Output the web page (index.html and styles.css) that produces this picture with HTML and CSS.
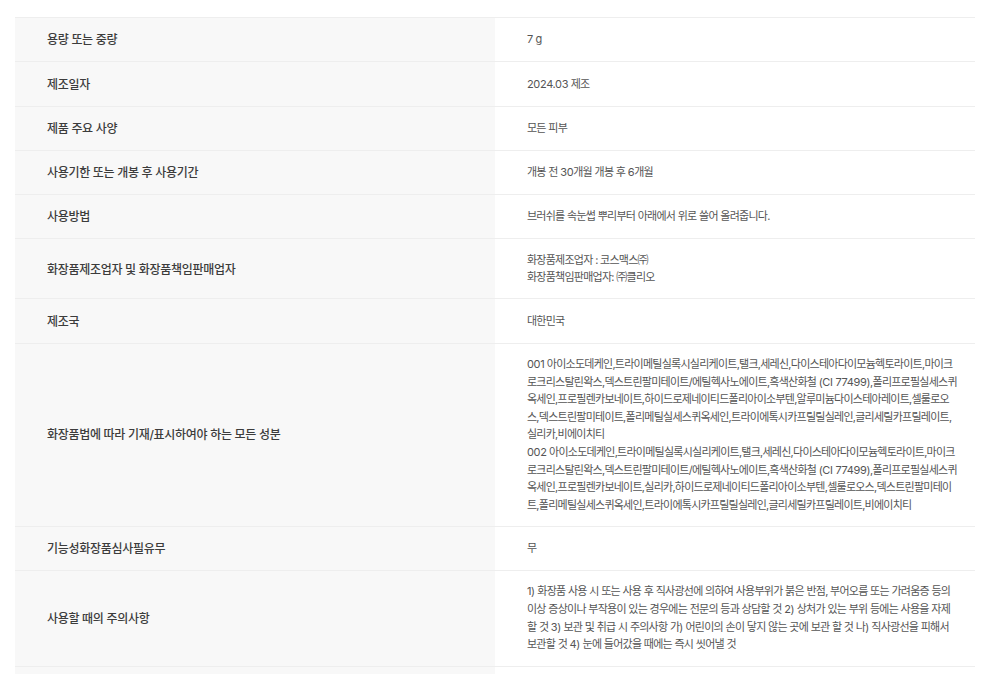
FILE: index.html
```html
<!DOCTYPE html>
<html lang="ko">
<head>
<meta charset="utf-8">
<title>상품 정보</title>
<link rel="stylesheet" href="styles.css">
</head>
<body>
<table class="spec">
<tbody>
<tr><th>용량 또는 중량</th><td><span class="num">7 g</span></td></tr>
<tr><th>제조일자</th><td><span class="num">2024.03</span> 제조</td></tr>
<tr><th>제품 주요 사양</th><td>모든 피부</td></tr>
<tr><th>사용기한 또는 개봉 후 사용기간</th><td>개봉 전 <span class="num">30</span>개월 개봉 후 <span class="num">6</span>개월</td></tr>
<tr><th>사용방법</th><td>브러쉬를 속눈썹 뿌리부터 아래에서 위로 쓸어 올려줍니다.</td></tr>
<tr><th>화장품제조업자 및 화장품책임판매업자</th><td>화장품제조업자 : 코스맥스㈜<br>화장품책임판매업자: ㈜클리오</td></tr>
<tr><th>제조국</th><td>대한민국</td></tr>
<tr><th>화장품법에 따라 기재/표시하여야 하는 모든 성분</th><td><span class="num">001</span> 아이소도데케인,트라이메틸실록시실리케이트,탤크,세레신,다이스테아다이모늄헥토라이트,마이크로크리스탈린왁스,덱스트린팔미테이트/에틸헥사노에이트,흑색산화철 <span class="num">(CI 77499)</span>,폴리프로필실세스퀴옥세인,프로필렌카보네이트,하이드로제네이티드폴리아이소부텐,알루미늄다이스테아레이트,셀룰로오스,덱스트린팔미테이트,폴리메틸실세스퀴옥세인,트라이에톡시카프릴릴실레인,글리세릴카프릴레이트,실리카,비에이치티<br><span class="num">002</span> 아이소도데케인,트라이메틸실록시실리케이트,탤크,세레신,다이스테아다이모늄헥토라이트,마이크로크리스탈린왁스,덱스트린팔미테이트/에틸헥사노에이트,흑색산화철 <span class="num">(CI 77499)</span>,폴리프로필실세스퀴옥세인,프로필렌카보네이트,실리카,하이드로제네이티드폴리아이소부텐,셀룰로오스,덱스트린팔미테이트,폴리메틸실세스퀴옥세인,트라이에톡시카프릴릴실레인,글리세릴카프릴레이트,비에이치티</td></tr>
<tr><th>기능성화장품심사필유무</th><td>무</td></tr>
<tr class="notice"><th>사용할 때의 주의사항</th><td><span class="num">1)</span> 화장품 사용 시 또는 사용 후 직사광선에 의하여 사용부위가 붉은 반점, 부어오름 또는 가려움증 등의 이상 증상이나 부작용이 있는 경우에는 전문의 등과 상담할 것 <span class="num">2)</span> 상처가 있는 부위 등에는 사용을 자제할 것 <span class="num">3)</span> 보관 및 취급 시 주의사항 가<span class="num">)</span> 어린이의 손이 닿지 않는 곳에 보관 할 것 나<span class="num">)</span> 직사광선을 피해서 보관할 것 <span class="num">4)</span> 눈에 들어갔을 때에는 즉시 씻어낼 것</td></tr>
<tr><th></th><td></td></tr>
</tbody>
</table>
</body>
</html>
```
FILE: styles.css
```css
html, body {
  margin: 0;
  padding: 0;
  background: #fff;
  height: 674px;
  overflow: hidden;
}
body {
  padding: 17.2px 27px 0 15px;
  font-family: Inter, "Noto Sans CJK KR", sans-serif;
  font-size: 11px;
  color: #555;
}
.spec {
  width: 960px;
  border-collapse: collapse;
  table-layout: fixed;
  border-top: 1px solid #eee;
}
.spec tr {
  border-bottom: 1px solid #eee;
}
.spec th {
  box-sizing: border-box;
  width: 480px;
  padding: 12.3px 32px 11.5px;
  background: #f8f8f8;
  text-align: left;
  font-size: 12px;
  line-height: 19.45px;
  font-weight: 500;
  letter-spacing: -0.3px;
  color: #3c3c3c;
}
.spec td {
  padding: 12.3px 16px 11.5px 32px;
  line-height: 17.6px;
  letter-spacing: -0.75px;
  word-spacing: 0.2px;
  word-break: break-all;
}
.spec .notice td {
  padding-bottom: 12.3px;
}
.num {
  letter-spacing: -0.35px;
  word-spacing: 0;
}
```
